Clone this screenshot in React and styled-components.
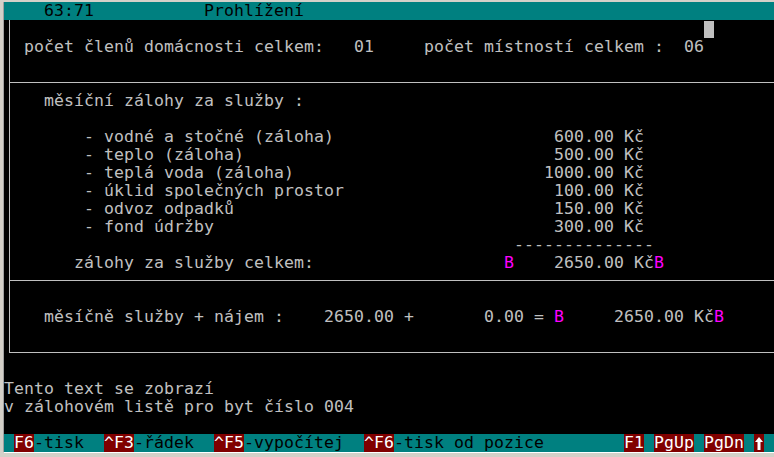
import React from 'react';
import styled, { createGlobalStyle } from 'styled-components';

const Global = createGlobalStyle`
  html, body { margin: 0; padding: 0; background: #d4d0c8; overflow: hidden; }
`;

const Frame = styled.div`
  width: 774px;
  height: 457px;
  box-sizing: border-box;
  padding: 2px 0 0 4px;
  background: #d4d0c8;
  overflow: hidden;
`;

const Screen = styled.div`
  width: 770px;
  height: 450px;
  background: #000;
  display: flex;
  flex-direction: column;
  font-family: "DejaVu Sans Mono", "Liberation Mono", monospace;
  font-size: 16.5px;
  letter-spacing: 0.066px;
  line-height: 18px;
  color: #c0c0c0;
  box-shadow: 0 1px 0 #ffffff, -1px 0 0 #a0a0a0;
`;

const Row = styled.div`
  height: 18px;
  white-space: pre;
  overflow: hidden;
`;

const TitleBar = styled(Row)`
  background: #008080;
  color: #000;
`;

const BottomBar = styled(Row)`
  margin-top: auto;
  background: #008080;
  color: #000;
`;

const Panel = styled.div`
  margin-left: 5px;
  border-left: 1px solid #c0c0c0;
  border-bottom: 1px solid #c0c0c0;
  display: flex;
  flex-direction: column;
`;

const Section = styled.div`
  padding: ${p => p.$top || 0}px 0 ${p => p.$bottom || 0}px 4px;
  border-bottom: ${p => (p.$rule ? '1px solid #c0c0c0' : 'none')};
`;

const Message = styled.div`
  margin-top: 27px;
  display: flex;
  flex-direction: column;
`;

const Hi = styled.span`
  color: #ff00ff;
`;

const Key = styled.span`
  background: #800000;
  color: #ffffff;
`;

const ArrowKey = styled.span`
  display: inline-block;
  width: 10px;
  height: 18px;
  vertical-align: top;
  background: #800000;
  svg { display: block; }
`;

const Cursor = styled.span`
  display: inline-block;
  width: 10px;
  height: 17px;
  margin-top: 1px;
  vertical-align: top;
  background: #c0c0c0;
`;

const kinds = { hi: Hi, key: Key };

function UpArrow() {
  return (
    <ArrowKey>
      <svg width="10" height="18" viewBox="0 0 10 18">
        <path d="M5 3 L9 8 H6.5 V16 H3.5 V8 H1 Z" fill="#ffffff" />
      </svg>
    </ArrowKey>
  );
}

function Line({ as: As = Row, start = 0, segs = [] }) {
  const out = [];
  let cur = start;
  segs.forEach(([col, text, kind], i) => {
    if (col > cur) out.push(' '.repeat(col - cur));
    if (kind === 'cursor') {
      out.push(<Cursor key={i} />);
      cur = col + 1;
      return;
    }
    if (kind === 'arrow') {
      out.push(<UpArrow key={i} />);
      cur = col + 1;
      return;
    }
    const K = kinds[kind];
    out.push(K ? <K key={i}>{text}</K> : text);
    cur = col + text.length;
  });
  return <As>{out}</As>;
}

const items = [
  ['- vodné a stočné (záloha)', '600.00 Kč'],
  ['- teplo (záloha)', '500.00 Kč'],
  ['- teplá voda (záloha)', '1000.00 Kč'],
  ['- úklid společných prostor', '100.00 Kč'],
  ['- odvoz odpadků', '150.00 Kč'],
  ['- fond údržby', '300.00 Kč'],
];

export default function App() {
  return (
    <>
      <Global />
      <Frame>
        <Screen>
          <Line as={TitleBar} segs={[[4, '63:71'], [20, 'Prohlížení']]} />
          <Panel>
            <Section $bottom={8} $rule>
              <Line start={1} segs={[[70, '', 'cursor']]} />
              <Line
                start={1}
                segs={[
                  [2, 'počet členů domácnosti celkem:'],
                  [35, '01'],
                  [42, 'počet místností celkem :'],
                  [68, '06'],
                ]}
              />
              <Row />
            </Section>
            <Section $top={9} $bottom={8} $rule>
              <Line start={1} segs={[[4, 'měsíční zálohy za služby :']]} />
              <Row />
              {items.map(([label, value]) => (
                <Line
                  key={label}
                  start={1}
                  segs={[[8, label], [64 - value.length, value]]}
                />
              ))}
              <Line start={1} segs={[[51, '--------------']]} />
              <Line
                start={1}
                segs={[
                  [7, 'zálohy za služby celkem:'],
                  [50, 'B', 'hi'],
                  [55, '2650.00 Kč'],
                  [65, 'B', 'hi'],
                ]}
              />
            </Section>
            <Section $top={9} $bottom={8}>
              <Row />
              <Line
                start={1}
                segs={[
                  [4, 'měsíčně služby + nájem :'],
                  [32, '2650.00'],
                  [40, '+'],
                  [48, '0.00'],
                  [53, '='],
                  [55, 'B', 'hi'],
                  [61, '2650.00 Kč'],
                  [71, 'B', 'hi'],
                ]}
              />
              <Row />
            </Section>
          </Panel>
          <Message>
            <Row>Tento text se zobrazí</Row>
            <Row>v zálohovém listě pro byt číslo 004</Row>
          </Message>
          <Line
            as={BottomBar}
            segs={[
              [1, 'F6', 'key'],
              [3, '-tisk'],
              [10, '^F3', 'key'],
              [13, '-řádek'],
              [21, '^F5', 'key'],
              [24, '-vypočítej'],
              [36, '^F6', 'key'],
              [39, '-tisk od pozice'],
              [62, 'F1', 'key'],
              [65, 'PgUp', 'key'],
              [70, 'PgDn', 'key'],
              [75, '', 'arrow'],
            ]}
          />
        </Screen>
      </Frame>
    </>
  );
}
